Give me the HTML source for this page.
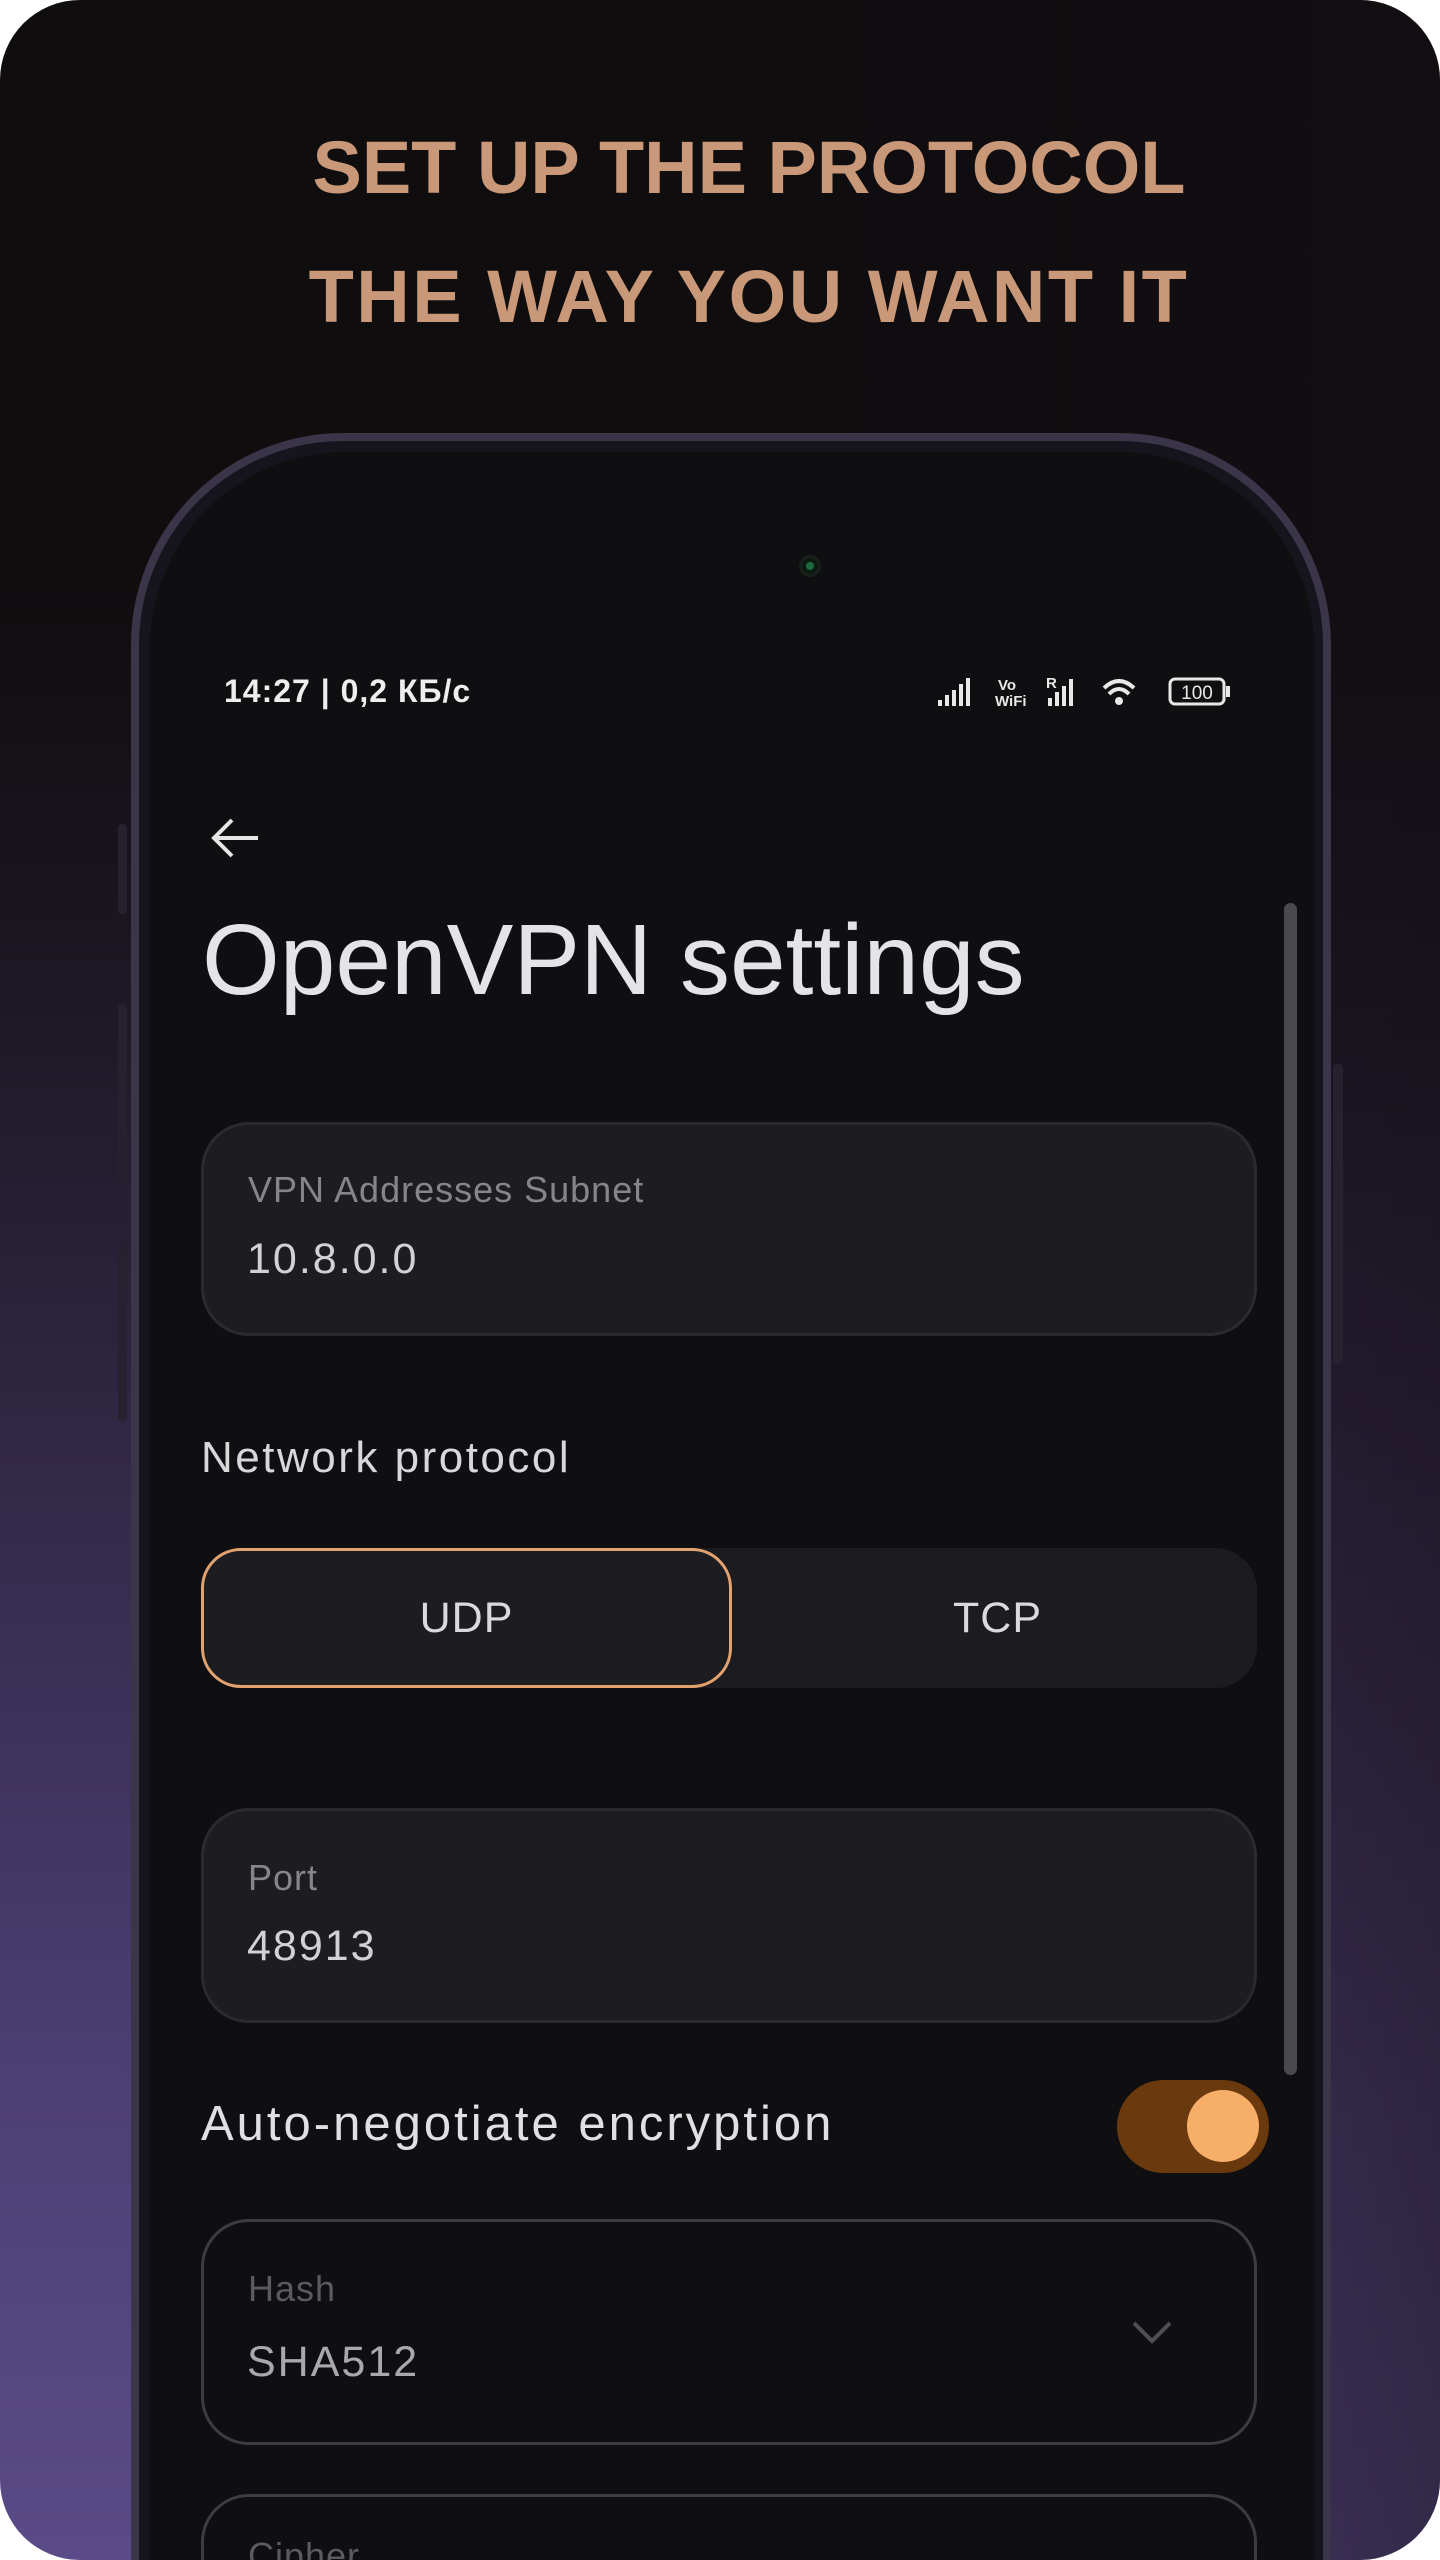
<!DOCTYPE html>
<html><head><meta charset="utf-8"><style>
*{margin:0;padding:0;box-sizing:border-box}
html,body{width:1440px;height:2560px;background:#fff;overflow:hidden}
.page{position:absolute;left:0;top:0;width:1440px;height:2560px;border-radius:80px;overflow:hidden;
background:linear-gradient(180deg,#0f0d0e 0%,#0f0d0e 22%,#1c1722 38%,#352b4c 60%,#4d4076 82%,#5a4b88 100%);font-family:"Liberation Sans",sans-serif}
.shade{position:absolute;inset:0;background:linear-gradient(90deg,rgba(15,12,16,0) 0%,rgba(15,12,16,0) 40%,rgba(20,14,22,.55) 100%)}
.t{position:absolute;white-space:nowrap;line-height:1}
.h{left:29px;width:1440px;text-align:center;color:#c99878;font-weight:bold;font-size:74px;letter-spacing:0}
.frame{position:absolute;left:131px;top:433px;width:1200px;height:2400px;border-radius:212px;background:#16141c;border:8px solid #3a3549}
.screen{position:absolute;left:150px;top:452px;width:1164px;height:2300px;border-radius:195px;background:#0f0f11}
.btn{position:absolute;background:#25212e;border-radius:4px}
.field{position:absolute;left:201px;width:1056px;border-radius:48px;background:#1d1d21;border:3px solid #2a2a2f}
.lab{color:#85858a;font-size:36px;letter-spacing:1px}
.val{color:#d2d2d4;font-size:43px;letter-spacing:2px}
</style></head><body><div class="page"><div class="shade"></div>
<div class="t h" style="top:131px">SET UP THE PROTOCOL</div>
<div class="t h" style="top:260px;letter-spacing:2.5px">THE WAY YOU WANT IT</div>
<div class="btn" style="left:118px;top:824px;width:9px;height:90px"></div>
<div class="btn" style="left:118px;top:1004px;width:9px;height:180px"></div>
<div class="btn" style="left:118px;top:1241px;width:9px;height:180px"></div>
<div class="btn" style="left:1333px;top:1064px;width:10px;height:300px"></div>
<div class="frame"></div>
<div class="screen"></div>
<div style="position:absolute;left:799px;top:555px;width:22px;height:22px;border-radius:50%;background:#0c1a12;border:3px solid #1a1f1c"></div>
<div style="position:absolute;left:806px;top:562px;width:8px;height:8px;border-radius:50%;background:#1d6a3a"></div>
<div class="t" style="left:224px;top:675px;color:#eee;font-size:32px;font-weight:bold;letter-spacing:1px">14:27 | 0,2 КБ/с</div>
<svg style="position:absolute;left:936px;top:670px" width="310" height="46" viewBox="0 0 310 46">
<g fill="#e8e8e8"><rect x="2" y="30" width="4" height="6"/><rect x="9" y="25" width="4" height="11"/><rect x="16" y="20" width="4" height="16"/><rect x="23" y="14" width="4" height="22"/><rect x="30" y="8" width="4" height="28"/>
<text x="62" y="20" font-size="15" font-family="Liberation Sans" font-weight="bold">Vo</text><text x="59" y="36" font-size="15" font-family="Liberation Sans" font-weight="bold">WiFi</text>
<text x="110" y="18" font-size="15" font-family="Liberation Sans" font-weight="bold">R</text>
<rect x="112" y="28" width="4" height="8"/><rect x="119" y="22" width="4" height="14"/><rect x="126" y="16" width="4" height="20"/><rect x="133" y="9" width="4" height="27"/></g>
<g fill="none" stroke="#e8e8e8" stroke-width="4"><path d="M168 18 Q183 4 198 18"/><path d="M173 24 Q183 14 193 24"/></g>
<circle cx="183" cy="31" r="4" fill="#e8e8e8"/>
<rect x="234" y="9" width="54" height="25" rx="5" fill="none" stroke="#e8e8e8" stroke-width="3"/><rect x="290" y="16" width="4" height="11" fill="#e8e8e8"/>
<text x="261" y="29" font-size="19" text-anchor="middle" fill="#e8e8e8" font-family="Liberation Sans">100</text></svg>
<svg style="position:absolute;left:208px;top:814px" width="54" height="48" viewBox="0 0 54 48"><path d="M50 24H6M24 6L6 24L24 42" fill="none" stroke="#e6e6e6" stroke-width="4"/></svg>
<div class="t" style="left:202px;top:910px;color:#e4e4e6;font-size:100px;letter-spacing:0">OpenVPN settings</div>
<div style="position:absolute;left:1284px;top:903px;width:13px;height:1172px;border-radius:7px;background:#4a4a4e"></div>
<div class="field" style="top:1122px;height:214px"></div>
<div class="t lab" style="left:248px;top:1172px">VPN Addresses Subnet</div>
<div class="t val" style="left:247px;top:1238px">10.8.0.0</div>
<div class="t" style="left:201px;top:1436px;color:#d8d8da;font-size:44px;letter-spacing:2.5px">Network protocol</div>
<div style="position:absolute;left:201px;top:1548px;width:1056px;height:140px;border-radius:42px;background:#1c1c20"></div>
<div style="position:absolute;left:201px;top:1548px;width:531px;height:140px;border-radius:40px;background:#1d1d21;border:3px solid #e2a270"></div>
<div class="t" style="left:201px;width:531px;text-align:center;top:1597px;color:#dadadc;font-size:43px;letter-spacing:1px">UDP</div>
<div class="t" style="left:732px;width:531px;text-align:center;top:1597px;color:#dadadc;font-size:43px;letter-spacing:1px">TCP</div>
<div class="field" style="top:1808px;height:215px"></div>
<div class="t lab" style="left:248px;top:1860px">Port</div>
<div class="t val" style="left:247px;top:1925px">48913</div>
<div class="t" style="left:201px;top:2100px;color:#e0e0e2;font-size:49px;letter-spacing:3px">Auto-negotiate encryption</div>
<div style="position:absolute;left:1117px;top:2080px;width:152px;height:93px;border-radius:47px;background:#6a3a0e"></div>
<div style="position:absolute;left:1187px;top:2090px;width:72px;height:72px;border-radius:50%;background:#f7ae68"></div>
<div class="field" style="top:2219px;height:226px;background:#0f0f11;border-color:#3c3c41"></div>
<div class="t" style="left:248px;top:2271px;color:#5a5a5f;font-size:36px;letter-spacing:1px">Hash</div>
<div class="t" style="left:247px;top:2341px;color:#a9a9ad;font-size:43px;letter-spacing:2px">SHA512</div>
<svg style="position:absolute;left:1130px;top:2318px" width="44" height="28" viewBox="0 0 44 28"><path d="M4 5L22 23L40 5" fill="none" stroke="#4f4f54" stroke-width="4"/></svg>
<div class="field" style="top:2494px;height:100px;background:#0f0f11;border-color:#3c3c41;border-bottom:none;border-bottom-left-radius:0;border-bottom-right-radius:0"></div>
<div class="t" style="left:248px;top:2538px;color:#5a5a5f;font-size:36px;letter-spacing:1px">Cipher</div>
</div></body></html>
